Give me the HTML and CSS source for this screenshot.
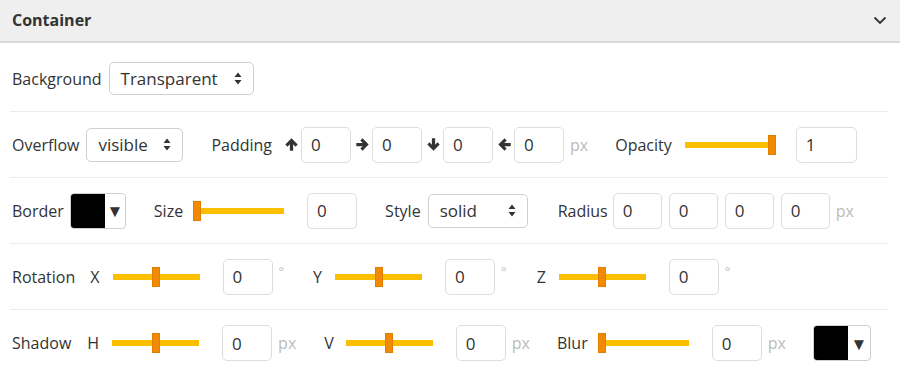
FILE: index.html
```html
<!DOCTYPE html>
<html lang="en">

<head>
    <meta charset="UTF-8">
    <meta name="viewport" content="width=device-width, initial-scale=1.0">
    <title>Container</title>
    <link rel="stylesheet" href="styles.css">
</head>

<body>
    <div class="panel">
        <div class="panel-header">
            <span class="panel-title">Container</span>
            <svg class="chevron" width="14" height="9" viewBox="0 0 14 9">
                <path d="M1.5 1.5 L7 7 L12.5 1.5" fill="none" stroke="#333" stroke-width="1.8" />
            </svg>
        </div>

        <div class="panel-body">
            <!-- background -->
            <div class="row row-first">
                <span class="lbl">Background</span>
                <div class="select sel-bg">
                    <span>Transparent</span>
                    <svg class="updown" width="8" height="13" viewBox="0 0 8 13">
                        <path d="M4 0.5 L7.5 5 H0.5 Z M4 12.5 L7.5 8 H0.5 Z" fill="#333" />
                    </svg>
                </div>
            </div>

            <!-- overflow / padding / opacity -->
            <div class="row">
                <span class="lbl">Overflow</span>
                <div class="select sel-overflow">
                    <span>visible</span>
                    <svg class="updown" width="8" height="13" viewBox="0 0 8 13">
                        <path d="M4 0.5 L7.5 5 H0.5 Z M4 12.5 L7.5 8 H0.5 Z" fill="#333" />
                    </svg>
                </div>

                <div class="field field-padding">
                    <span class="lbl lbl-padding">Padding</span>
                    <svg class="arrow" width="13" height="13" viewBox="0 0 12 12">
                        <path d="M6 0.3 L11.7 6 L9.7 8 L7.5 5.8 V11.7 H4.5 V5.8 L2.3 8 L0.3 6 Z" fill="#333" />
                    </svg>
                    <input class="num" type="text" value="0">
                    <svg class="arrow arrow-right" width="13" height="13" viewBox="0 0 12 12">
                        <path d="M6 0.3 L11.7 6 L9.7 8 L7.5 5.8 V11.7 H4.5 V5.8 L2.3 8 L0.3 6 Z" fill="#333" />
                    </svg>
                    <input class="num" type="text" value="0">
                    <svg class="arrow arrow-down" width="13" height="13" viewBox="0 0 12 12">
                        <path d="M6 0.3 L11.7 6 L9.7 8 L7.5 5.8 V11.7 H4.5 V5.8 L2.3 8 L0.3 6 Z" fill="#333" />
                    </svg>
                    <input class="num" type="text" value="0">
                    <svg class="arrow arrow-left" width="13" height="13" viewBox="0 0 12 12">
                        <path d="M6 0.3 L11.7 6 L9.7 8 L7.5 5.8 V11.7 H4.5 V5.8 L2.3 8 L0.3 6 Z" fill="#333" />
                    </svg>
                    <input class="num" type="text" value="0">
                    <span class="unit">px</span>
                </div>

                <div class="field field-opacity">
                    <span class="lbl lbl-wide">Opacity</span>
                    <div class="slider slider-long"><span class="thumb thumb-end" style="left: 100%"></span></div>
                    <input class="num num-wide" type="text" value="1">
                </div>
            </div>

            <!-- border -->
            <div class="row">
                <span class="lbl lbl-border">Border</span>
                <div class="color-pick">
                    <span class="swatch"></span>
                    <span class="caret">▼</span>
                </div>

                <div class="field">
                    <span class="lbl lbl-size">Size</span>
                    <div class="slider slider-long"><span class="thumb thumb-start" style="left: 0%"></span></div>
                    <input class="num" type="text" value="0">
                </div>

                <div class="field">
                    <span class="lbl">Style</span>
                    <div class="select sel-style">
                        <span>solid</span>
                        <svg class="updown" width="8" height="13" viewBox="0 0 8 13">
                            <path d="M4 0.5 L7.5 5 H0.5 Z M4 12.5 L7.5 8 H0.5 Z" fill="#333" />
                        </svg>
                    </div>
                </div>

                <div class="field field-radius">
                    <span class="lbl lbl-radius">Radius</span>
                    <div class="radius-inputs">
                        <input class="num" type="text" value="0">
                        <input class="num" type="text" value="0">
                        <input class="num" type="text" value="0">
                        <input class="num" type="text" value="0">
                    </div>
                    <span class="unit">px</span>
                </div>
            </div>

            <!-- rotation -->
            <div class="row">
                <span class="lbl">Rotation</span>
                <span class="axis axis-x">X</span>
                <div class="slider"><span class="thumb" style="left: 50%"></span></div>
                <input class="num" type="text" value="0">
                <span class="unit unit-deg">°</span>

                <div class="field field-deg">
                    <span class="axis">Y</span>
                    <div class="slider"><span class="thumb" style="left: 50%"></span></div>
                    <input class="num" type="text" value="0">
                    <span class="unit unit-deg">°</span>
                </div>

                <div class="field field-deg">
                    <span class="axis">Z</span>
                    <div class="slider"><span class="thumb" style="left: 50%"></span></div>
                    <input class="num" type="text" value="0">
                    <span class="unit unit-deg">°</span>
                </div>
            </div>

            <!-- shadow -->
            <div class="row">
                <span class="lbl">Shadow</span>
                <span class="axis axis-h">H</span>
                <div class="slider"><span class="thumb" style="left: 50%"></span></div>
                <input class="num" type="text" value="0">
                <span class="unit">px</span>

                <div class="field field-v">
                    <span class="axis axis-v">V</span>
                    <div class="slider"><span class="thumb" style="left: 50%"></span></div>
                    <input class="num" type="text" value="0">
                    <span class="unit">px</span>
                </div>

                <div class="field field-blur">
                    <span class="lbl lbl-blur">Blur</span>
                    <div class="slider slider-long"><span class="thumb thumb-start" style="left: 0%"></span></div>
                    <input class="num" type="text" value="0">
                    <span class="unit">px</span>
                </div>

                <div class="color-pick color-pick-shadow">
                    <span class="swatch"></span>
                    <span class="caret">▼</span>
                </div>
            </div>
        </div>
    </div>
</body>

</html>
```

FILE: styles.css
```css
:root {
    --text-color: #333;
    --muted-color: #bbb;
    --line-color: #ececec;
    --field-border: #ddd;
    --track-color: #fcbf00;
    --thumb-color: #f18a00;
}

* {
    box-sizing: border-box;
    margin: 0;
    padding: 0;
}

body {
    font-family: 'Open Sans', 'Liberation Sans', Arial, sans-serif;
    font-size: 16px;
    color: var(--text-color);
    background: #fff;
}

.panel-header {
    height: 43px;
    display: flex;
    align-items: center;
    justify-content: space-between;
    padding: 0 13px 2px 12px;
    background: #efefef;
    border-bottom: 2px solid #d9d9d9;
}

.panel-title {
    font-weight: bold;
    font-size: 16px;
}

.chevron {
    margin-top: 2px;
}

.panel-body {
    padding-top: 3px;
}

.row {
    height: 66px;
    display: flex;
    align-items: center;
    margin: 0 12px 0 10px;
    padding-left: 2px;
    border-bottom: 1px solid var(--line-color);
}

.row:last-child {
    border-bottom: none;
}

.field {
    display: flex;
    align-items: center;
    margin-left: 28px;
}

.lbl {
    margin-right: 7px;
    white-space: nowrap;
}

.lbl-border {
    margin-right: 6px;
}

.lbl-size {
    margin-right: 10px;
}

.lbl-padding {
    margin-right: 13px;
}

.lbl-wide {
    margin-right: 13px;
}

.lbl-radius {
    margin-right: 5px;
}

.lbl-blur {
    margin-right: 10px;
}

.field-opacity {
    margin-left: 27px;
}

.field-radius {
    margin-left: 30px;
}

.field-deg {
    margin-left: 29px;
}

.field-deg + .field-deg {
    margin-left: 30px;
}

.field-v {
    margin-left: 28px;
}

.field-blur {
    margin-left: 27px;
}

.axis {
    margin-right: 13px;
}

.axis-x {
    margin-left: 8px;
}

.axis-h {
    margin-left: 9px;
}

.axis-v {
    margin-right: 12px;
}

/* selects */
.select {
    height: 34px;
    display: flex;
    align-items: center;
    justify-content: space-between;
    padding: 0 11px 0 11px;
    border: 1px solid #cfcfcf;
    border-radius: 5px;
    background: #fff;
    font-size: 17px;
}

.sel-bg {
    width: 145px;
    height: 33px;
}

.sel-overflow {
    width: 97px;
}

.sel-style {
    width: 100px;
}

.updown {
    display: block;
}

/* number inputs */
.num {
    width: 50px;
    height: 36px;
    padding: 0 0 0 9px;
    border: 1px solid var(--field-border);
    border-radius: 5px;
    font-family: inherit;
    font-size: 17px;
    color: var(--text-color);
    background: #fff;
    outline: none;
}

.num-wide {
    width: 61px;
}

.radius-inputs {
    display: flex;
    gap: 7px;
}

.radius-inputs .num {
    width: 49px;
}

.unit {
    margin-left: 6px;
    color: var(--muted-color);
}

.unit-deg {
    font-size: 13px;
    margin-bottom: 12px;
}

/* padding arrows */
.arrow {
    display: block;
    margin: 0 3px 0 0;
}

.num + .arrow {
    margin-left: 5px;
}

.arrow-right {
    transform: rotate(90deg);
}

.arrow-down {
    transform: rotate(180deg);
}

.arrow-left {
    transform: rotate(-90deg);
}

/* sliders */
.slider {
    position: relative;
    width: 87px;
    height: 6px;
    margin-right: 23px;
    background: var(--track-color);
}

.slider-long {
    width: 91px;
}

.field-opacity .slider {
    margin-right: 20px;
}

.thumb {
    position: absolute;
    top: -7px;
    width: 8px;
    height: 20px;
    margin-left: -4px;
    background: var(--thumb-color);
    border: 1px solid #e07e00;
}

.thumb-start {
    margin-left: 0;
}

.thumb-end {
    margin-left: -8px;
}

/* color pickers */
.color-pick {
    width: 56px;
    height: 36px;
    display: flex;
    border: 1px solid #cfcfcf;
    border-radius: 4px;
    overflow: hidden;
}

.swatch {
    width: 35px;
    margin: -1px 0 -1px -1px;
    background: #000;
}

.caret {
    flex: 1;
    display: flex;
    align-items: center;
    justify-content: center;
    font-size: 17px;
    color: #333;
}

.color-pick-shadow {
    width: 58px;
    margin-left: 27px;
}
```
